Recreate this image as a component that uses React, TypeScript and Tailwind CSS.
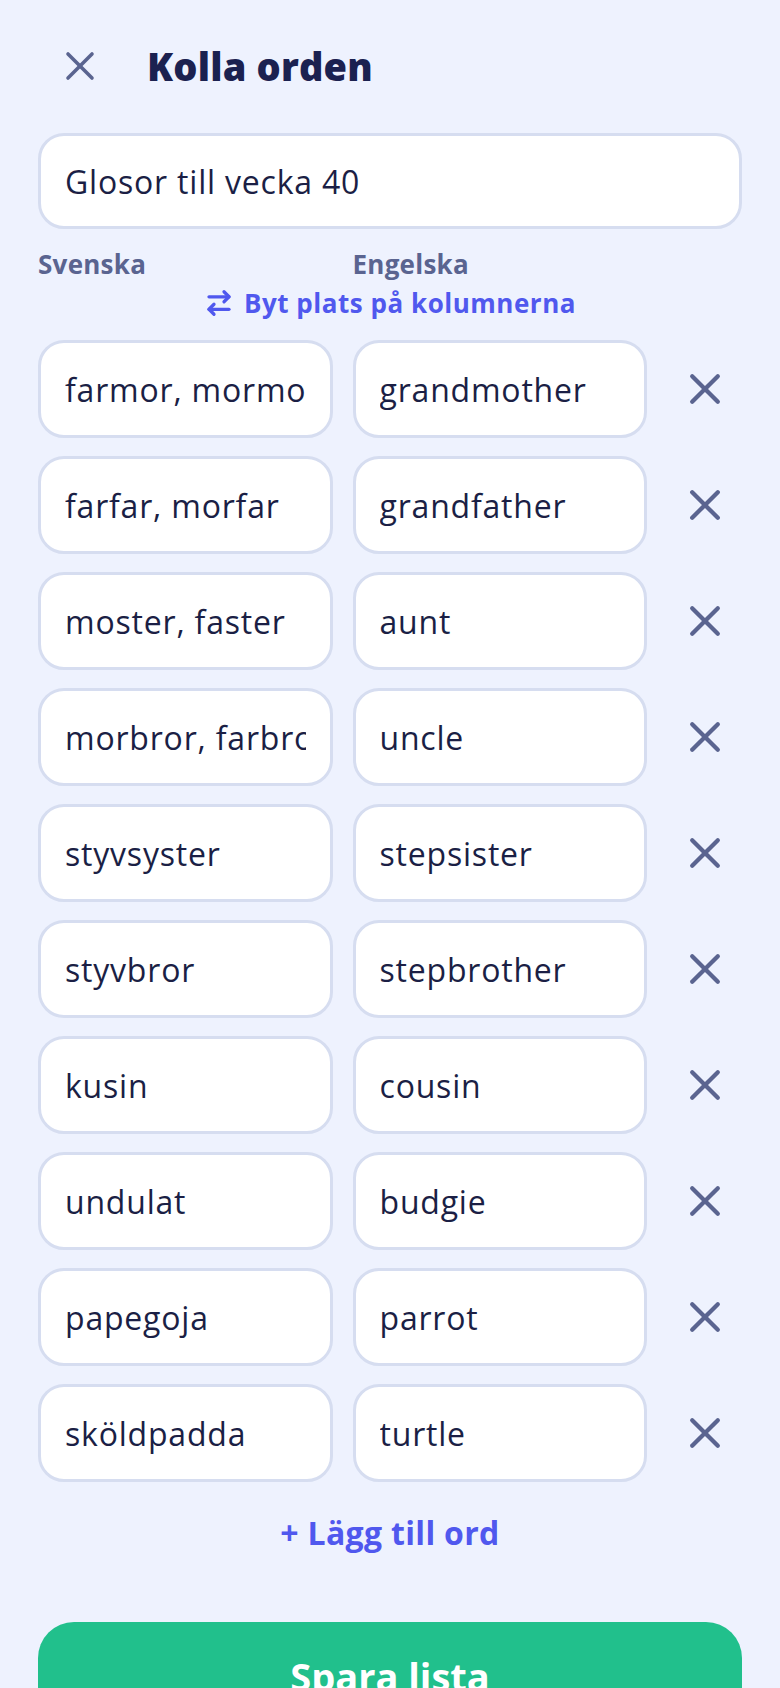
import React from 'react';
import { ArrowRightLeft } from 'lucide-react';

const words: [string, string][] = [
  ['farmor, mormor', 'grandmother'],
  ['farfar, morfar', 'grandfather'],
  ['moster, faster', 'aunt'],
  ['morbror, farbror', 'uncle'],
  ['styvsyster', 'stepsister'],
  ['styvbror', 'stepbrother'],
  ['kusin', 'cousin'],
  ['undulat', 'budgie'],
  ['papegoja', 'parrot'],
  ['sköldpadda', 'turtle'],
];

const Cross = ({ size, stroke }: { size: number; stroke: number }) => (
  <svg width={size} height={size} viewBox="0 0 30 30" fill="none" stroke="currentColor" strokeWidth={stroke} strokeLinecap="round">
    <path d="M3 3 27 27" />
    <path d="M27 3 3 27" />
  </svg>
);

const inputCls =
  'w-full min-w-0 h-[98px] bg-white border-[3px] border-[#d6ddf0] rounded-[26px] px-[24px] text-[32px] font-medium tracking-[0.025em] text-[#1b1f45] outline-none';

export default function App() {
  return (
    <div className="min-h-screen bg-[#eef2fe] font-['Open_Sans','Noto_Sans',sans-serif] pt-[38px] px-[38px] pb-[40px]">
      {/* header */}
      <div className="flex items-center h-[56px]">
        <button className="ml-[27px] w-[30px] h-[30px] text-[#5a6490] flex items-center justify-center">
          <Cross size={30} stroke={3.6} />
        </button>
        <h1 className="ml-[52px] text-[38px] font-extrabold tracking-[0.005em] text-[#1b2150] leading-none">Kolla orden</h1>
      </div>

      <input className="mt-[39px] w-full h-[96px] bg-white border-[3px] border-[#d6ddf0] rounded-[26px] px-[24px] text-[32px] font-medium tracking-[0.025em] text-[#1b1f45] outline-none" defaultValue="Glosor till vecka 40" />

      <div className="mt-[16px] grid grid-cols-[1fr_1fr_75px] gap-x-[20px] h-[32px] items-center text-[26px] font-bold tracking-[0.01em] text-[#5a6490]">
        <span>Svenska</span>
        <span>Engelska</span>
      </div>

      <button className="mt-[6px] w-full h-[40px] flex items-center justify-center gap-[10px] text-[26px] font-bold tracking-[0.02em] text-[#5058ee]">
        <ArrowRightLeft size={30} strokeWidth={2.6} />
        <span>Byt plats på kolumnerna</span>
      </button>

      <div className="mt-[17px] flex flex-col gap-[18px]">
        {words.map(([sv, en]) => (
          <div key={sv} className="grid grid-cols-[1fr_1fr_75px] gap-x-[20px] items-center">
            <input className={inputCls} defaultValue={sv} />
            <input className={inputCls} defaultValue={en} />
            <button className="h-[98px] flex items-center justify-center text-[#5a6490]">
              <Cross size={32} stroke={4} />
            </button>
          </div>
        ))}
      </div>

      <button className="mt-[31px] w-full h-[40px] flex items-center justify-center text-[32px] font-bold tracking-[0.01em] text-[#5058ee]">
        + Lägg till ord
      </button>

      <button className="mt-[69px] w-full h-[108px] rounded-[36px] bg-[#21c08c] text-white text-[38px] font-bold">
        Spara lista
      </button>
    </div>
  );
}
